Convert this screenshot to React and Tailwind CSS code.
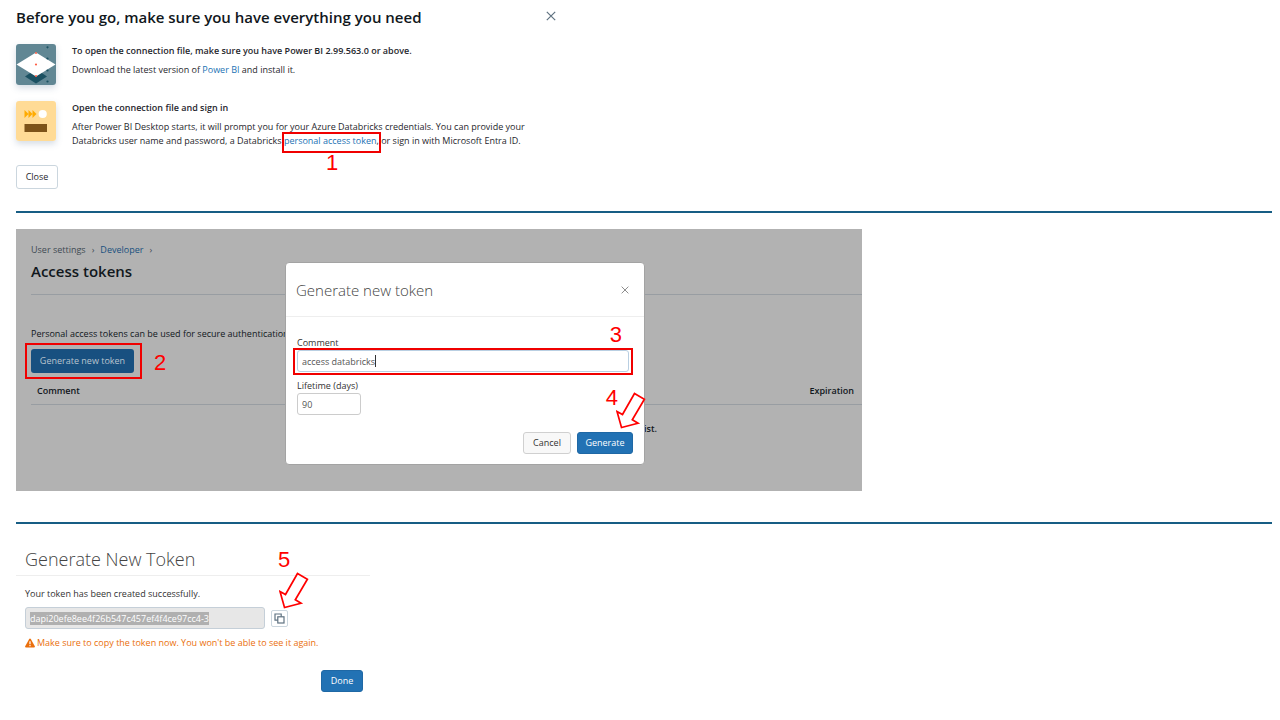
import { useEffect, useRef } from "react";

const primary =
  "rounded-[3px] bg-[#2272b4] text-white text-[9px] leading-[14px] border border-[#1f68a5]";

function Step({ className, children }) {
  return (
    <span
      className={`absolute font-['Liberation_Sans',sans-serif] text-[22px] leading-[22px] text-[#ff0000] ${className}`}
    >
      {children}
    </span>
  );
}

function Frame({ className }) {
  return <span className={`pointer-events-none absolute border-2 border-[#f00000] ${className}`} />;
}

function Arrow({ className }) {
  return (
    <svg className={`pointer-events-none absolute ${className}`} width="30" height="37" viewBox="0 0 30 37" aria-hidden="true">
      <path
        d="M18.5 1.5 L28.4 7.3 L16.3 27.8 L22 31.2 L5.5 35.5 L1 19.5 L6.5 22.5 Z"
        fill="#fff"
        stroke="#ff0000"
        strokeWidth="1.7"
      />
    </svg>
  );
}

function Cross({ size, className }) {
  return (
    <svg width={size} height={size} viewBox="0 0 10 10" className={className} aria-hidden="true">
      <path d="M0.8 0.8 L9.2 9.2 M9.2 0.8 L0.8 9.2" stroke="currentColor" strokeWidth="1.2" />
    </svg>
  );
}

function DownloadArt() {
  return (
    <svg width="40" height="41" viewBox="0 0 40 41" className="shrink-0 rounded-[3px] shadow-[0_3px_6px_rgba(90,120,150,0.25)]" aria-hidden="true">
      <rect width="40" height="41" fill="#618794" />
      <path d="M9 32.5 L20 25 L31 32.5 L20 39.5 Z" fill="#1b5162" />
      <path d="M0.5 20.5 L20 8.5 L39.5 20.5 L20 32.5 Z" fill="#fff" />
      <circle cx="20" cy="20.5" r="1.1" fill="#ff5f46" />
      <circle cx="20" cy="9" r="1" fill="#ff5f46" />
      <circle cx="20" cy="32" r="1" fill="#ff5f46" />
      <g fill="#1b5162">
        <circle cx="31.5" cy="3.3" r="1.1" />
        <circle cx="31.5" cy="14.5" r="1.1" />
        <circle cx="31.5" cy="26.5" r="1.1" />
        <circle cx="31.5" cy="37.5" r="1.1" />
      </g>
    </svg>
  );
}

function SignInArt() {
  return (
    <svg width="40" height="40" viewBox="0 0 40 40" className="shrink-0 rounded-[3px] shadow-[0_3px_6px_rgba(90,120,150,0.25)]" aria-hidden="true">
      <rect width="40" height="40" fill="#ffdb96" />
      <path d="M8.5 9 L12.5 13 L8.5 17 Z M12.5 9 L16.5 13 L12.5 17 Z M16.5 9 L20.5 13 L16.5 17 Z" fill="#ffab00" />
      <circle cx="26.7" cy="13" r="4.1" fill="#fff" />
      <rect x="8.5" y="23" width="22.5" height="8" fill="#7d5319" />
    </svg>
  );
}

function ConnectSection() {
  return (
    <section className="max-w-[562px] pb-[22px] pl-4 pt-[5px]">
      <header className="flex items-start justify-between">
        <h1 className="text-[15px] leading-6 font-semibold text-[#11171c]">
          Before you go, make sure you have everything you need
        </h1>
        <button aria-label="Close dialog" className="p-1.5 text-[#5f7281]">
          <Cross size={10} />
        </button>
      </header>
      <div className="mt-[15px] flex gap-4">
        <DownloadArt />
        <div className="text-[9px] leading-[14px]">
          <h2 className="font-semibold">To open the connection file, make sure you have Power BI 2.99.563.0 or above.</h2>
          <p className="mt-[5px]">
            Download the latest version of <a href="#power-bi" className="text-[#2272b4]">Power BI</a> and install it.
          </p>
        </div>
      </div>
      <div className="mt-4 flex gap-4">
        <SignInArt />
        <div className="text-[9px] leading-[14px]">
          <h2 className="font-semibold">Open the connection file and sign in</h2>
          <p className="mt-[5px]">
            After Power BI Desktop starts, it will prompt you for your Azure Databricks credentials. You can provide your
            <br />
            Databricks user name and password, a Databricks{" "}
            <span className="relative">
              <a href="#token" className="text-[#2272b4]">personal access token</a>,
              <Frame className="-inset-x-0.5 -bottom-1.5 -top-0.5" />
              <Step className="left-[42px] top-[18px]">1</Step>
            </span>{" "}
            or sign in with Microsoft Entra ID.
          </p>
        </div>
      </div>
      <button className="mt-[17px] block h-6 w-[42px] rounded-[3px] border border-[#cbd6de] bg-white text-[9px]">Close</button>
    </section>
  );
}

function TokenModal() {
  return (
    <div role="dialog" aria-label="Generate new token" className="absolute left-[269px] top-[33px] w-[360px] rounded-[4px] border border-[#a3a3a3] bg-white text-[#333]">
      <header className="flex h-[54px] items-center justify-between border-b border-[#eee] pl-2.5 pr-[15px]">
        <h2 className="text-[15px] leading-5 font-light text-[#444]">Generate new token</h2>
        <button aria-label="Close" className="text-[#888]">
          <Cross size={8} />
        </button>
      </header>
      <form className="flex flex-col px-[11px] pb-2.5 pt-[19px] text-[9px] leading-[14px]" onSubmit={(e) => e.preventDefault()}>
        <label htmlFor="comment">Comment</label>
        <div className="relative mr-1">
          <input
            id="comment"
            defaultValue="access databricks"
            className="block h-[22px] w-full rounded-[3px] border border-[#b9cfe2] pl-1 text-[9px] text-[#555] outline-none"
          />
          <span className="pointer-events-none absolute left-[5px] top-[5px] flex h-3">
            <span className="invisible">access databricks</span>
            <span className="w-px bg-[#333]" />
          </span>
          <Frame className="-inset-x-1 -bottom-[3px] -top-0.5" />
          <Step className="-top-[26px] right-[7px]">3</Step>
        </div>
        <label htmlFor="lifetime" className="mt-[7px]">Lifetime (days)</label>
        <input
          id="lifetime"
          defaultValue="90"
          className="h-[22px] w-16 rounded-[3px] border border-[#ccc] pl-1 text-[9px] text-[#555] outline-none"
        />
        <div className="relative mt-[17px] flex justify-end gap-1.5">
          <button type="button" className="h-[22px] w-12 rounded-[3px] border border-[#d0d0d0] bg-[#f8f8f8] text-[9px]">Cancel</button>
          <button type="submit" className={`h-[22px] w-14 ${primary}`}>Generate</button>
          <Step className="-top-[45px] right-[15px]">4</Step>
          <Arrow className="-right-[13px] -top-10" />
        </div>
      </form>
    </div>
  );
}

function SettingsSection() {
  return (
    <section className="relative mx-4 mt-4 h-[262px] max-w-[846px] bg-[#b2b2b2] pl-[15px] pt-3.5 text-[9px] leading-[14px] text-[#11171c]">
      <nav aria-label="Breadcrumb" className="flex gap-1.5 text-[#3f4a52]">
        <span>User settings</span>
        <span>›</span>
        <a href="#developer" className="text-[#18507e]">Developer</a>
        <span>›</span>
      </nav>
      <h1 className="mt-1 text-[15px] leading-5 font-semibold">Access tokens</h1>
      <hr className="mt-[13px] border-[#989da2]" />
      <p className="mt-8">Personal access tokens can be used for secure authentication</p>
      <div className="relative mt-2 w-[103px]">
        <button className="block h-6 w-full rounded-[3px] bg-[#185080] text-[#b8c4ce]">Generate new token</button>
        <Frame className="-bottom-1.5 -left-1.5 -right-2 -top-1.5" />
        <Step className="left-[123px] top-[3px]">2</Step>
      </div>
      <table className="mt-[9px] w-full">
        <thead>
          <tr className="border-b border-[#989da2]">
            <th className="pb-1.5 pl-1.5 pt-0.5 text-left font-semibold">Comment</th>
            <th className="pb-1.5 pr-2 pt-0.5 text-right font-semibold">Expiration</th>
          </tr>
        </thead>
        <tbody>
          <tr>
            <td colSpan={2} className="pr-[205px] pt-[17px] text-right font-semibold">ist.</td>
          </tr>
        </tbody>
      </table>
      <TokenModal />
    </section>
  );
}

function CreatedSection() {
  const token = useRef(null);
  useEffect(() => {
    token.current.focus();
    token.current.select();
  }, []);
  return (
    <section className="relative ml-4 mt-[18px] max-w-[354px] text-[9px] leading-[14px] text-[#333]">
      <h2 className="border-b border-[#eee] pb-1 pl-[9px] pt-[5px] text-[18px] leading-6 font-light text-[#444]">Generate New Token</h2>
      <div className="pl-[9px] pr-[7px] pt-[11px]">
        <label htmlFor="token" className="block">Your token has been created successfully.</label>
        <div className="relative mt-1.5 flex items-center gap-1.5">
          <input
            id="token"
            ref={token}
            readOnly
            defaultValue="dapi20efe8ee4f26b547c457ef4f4ce97cc4-3"
            className="h-[22px] w-60 rounded-[3px] border border-[#c5cfd8] bg-[#e7e7e7] pl-1 text-[9px] outline-none selection:bg-[#afafaf]/99 selection:text-white"
          />
          <button aria-label="Copy token" className="flex size-[17px] items-center justify-center rounded-[2px] border border-[#cbd6de] bg-white text-[#5f7281]">
            <svg width="11" height="11" viewBox="0 0 11 11" fill="none" stroke="currentColor" strokeWidth="1.2" aria-hidden="true">
              <path d="M3.8 7.2 H1 V1 H7.2 V3.8" />
              <rect x="3.8" y="3.8" width="6.2" height="6.2" />
            </svg>
          </button>
          <Step className="-top-[58px] left-[253px]">5</Step>
          <Arrow className="-top-[35px] left-[254px]" />
        </div>
        <p className="mt-[7px] flex items-center gap-0.5 text-[#ea6f0c]">
          <svg width="10" height="10" viewBox="0 0 10 10" aria-hidden="true">
            <path d="M5 0.6 Q5.5 0.6 5.8 1.1 L9.8 8.2 Q10 9.4 9 9.5 H1 Q0 9.4 0.2 8.2 L4.2 1.1 Q4.5 0.6 5 0.6 Z" fill="currentColor" />
            <path d="M5 3.2 V6.2 M5 7 V8.3" stroke="#fff" strokeWidth="1.2" />
          </svg>
          Make sure to copy the token now. You won't be able to see it again.
        </p>
        <div className="mt-5 flex justify-end">
          <button className={`h-[22px] w-[42px] ${primary}`}>Done</button>
        </div>
      </div>
    </section>
  );
}

export default function App() {
  return (
    <main className="min-h-screen bg-white font-['Open_Sans','Noto_Sans',sans-serif] text-[#1f272d]">
      <ConnectSection />
      <hr className="ml-4 mr-2 border-t-2 border-[#175d84]" />
      <SettingsSection />
      <hr className="ml-4 mr-2 mt-[31px] border-t-2 border-[#175d84]" />
      <CreatedSection />
    </main>
  );
}
